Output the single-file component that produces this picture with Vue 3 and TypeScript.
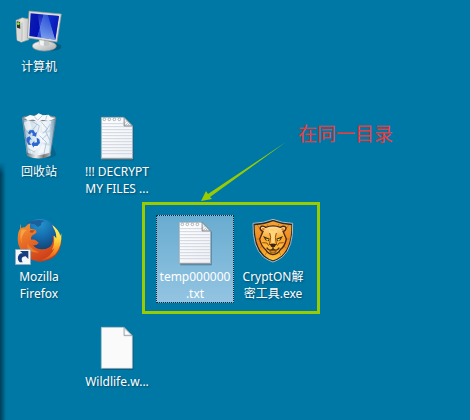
<script setup lang="ts">
type IconKind = 'computer' | 'bin' | 'firefox' | 'text' | 'blank' | 'lion'

interface DesktopItem {
  id: string
  kind: IconKind
  lines: string[]
  place: string
  selected?: boolean
}

const items: DesktopItem[] = [
  { id: 'computer', kind: 'computer', lines: ['计算机'], place: 'c1 r1' },
  { id: 'bin', kind: 'bin', lines: ['回收站'], place: 'c1 r2' },
  { id: 'firefox', kind: 'firefox', lines: ['Mozilla', 'Firefox'], place: 'c1 r3' },
  { id: 'decrypt', kind: 'text', lines: ['!!! DECRYPT', 'MY FILES ...'], place: 'c2 r2' },
  { id: 'wildlife', kind: 'blank', lines: ['Wildlife.w...'], place: 'c2 r4' },
  { id: 'temp', kind: 'text', lines: ['temp000000', '.txt'], place: 'c3 r3', selected: true },
  { id: 'crypton', kind: 'lion', lines: ['CryptON解', '密工具.exe'], place: 'c4 r3' },
]

const ruleLines = [56, 65, 74, 83, 92, 101, 110, 119, 128, 137, 146]
const rings = [79, 94, 109, 124]
</script>

<template>
  <main class="desktop">
    <div class="edge-shadow"></div>
    <button
      v-for="item in items"
      :key="item.id"
      type="button"
      class="item"
      :class="[item.place, { selected: item.selected }]"
    >
      <svg v-if="item.kind === 'computer'" class="icon" viewBox="45 24 144 144" aria-hidden="true">
        <defs>
          <linearGradient id="screen" x1="0" y1="0" x2="1" y2="0.25">
            <stop offset="0" stop-color="#0a1fae" />
            <stop offset="0.45" stop-color="#0510b4" />
            <stop offset="0.47" stop-color="#2c50d8" />
            <stop offset="0.75" stop-color="#1236cc" />
            <stop offset="1" stop-color="#0a1cb0" />
          </linearGradient>
          <linearGradient id="glare" x1="0" y1="0" x2="0" y2="1">
            <stop offset="0" stop-color="#8db6f6" stop-opacity="0.1" />
            <stop offset="1" stop-color="#a8ccff" stop-opacity="0.7" />
          </linearGradient>
          <linearGradient id="tower" x1="0" y1="0" x2="1" y2="0">
            <stop offset="0" stop-color="#a9aaa8" />
            <stop offset="0.4" stop-color="#e9e9e6" />
            <stop offset="1" stop-color="#c4c5c3" />
          </linearGradient>
          <linearGradient id="base" x1="0" y1="0" x2="1" y2="1">
            <stop offset="0" stop-color="#ffffff" />
            <stop offset="1" stop-color="#a6a8a8" />
          </linearGradient>
        </defs>
        <ellipse cx="146" cy="140" rx="38" ry="13" fill="#064a6b" opacity="0.6" />
        <path d="M48 61 67 53 87 57 87 119 64 127 51 121Z" fill="url(#tower)" stroke="#8f9596" stroke-width="2" />
        <path d="M48 61 64 64 66 126 51 121Z" fill="#d9dad7" />
        <path d="M50 64 60 66 61 86 51 83Z" fill="#2c332e" />
        <circle cx="55" cy="71" r="4" fill="#7cf12a" />
        <path d="M66 68V122" stroke="#a4a7a5" stroke-width="2" />
        <ellipse cx="133" cy="138" rx="36" ry="15" fill="url(#base)" stroke="#929797" stroke-width="2" />
        <path d="M116 116 145 120 149 134Q136 143 119 134Z" fill="#c2c5c5" />
        <path d="M119 119 132 121 131 139 120 134Z" fill="#f2f3f2" />
        <path d="M87 33 184 42 171 126 82 114Z" fill="#dcdddb" stroke="#8d9699" stroke-width="2" />
        <path d="M92 40 177 48 166 119 88 108Z" fill="url(#screen)" />
        <path d="M113 42 144 45 166 119 124 113Z" fill="url(#glare)" />
        <path d="M144 45 177 48 166 119Z" fill="#071cc0" opacity="0.55" />
      </svg>

      <svg v-else-if="item.kind === 'bin'" class="icon" viewBox="45 24 144 144" aria-hidden="true">
        <defs>
          <linearGradient id="glass" x1="0" y1="0" x2="1" y2="0">
            <stop offset="0" stop-color="#7fa4be" />
            <stop offset="0.2" stop-color="#c9dae7" />
            <stop offset="0.5" stop-color="#eef4f9" />
            <stop offset="0.8" stop-color="#c4d7e6" />
            <stop offset="1" stop-color="#64899f" />
          </linearGradient>
          <linearGradient id="metal" x1="0" y1="0" x2="1" y2="0">
            <stop offset="0" stop-color="#6b7175" />
            <stop offset="0.4" stop-color="#eeeeee" />
            <stop offset="0.7" stop-color="#777777" />
            <stop offset="1" stop-color="#bbbbbb" />
          </linearGradient>
        </defs>
        <path d="M152 110 170 151Q155 161 128 158Z" fill="#045075" opacity="0.45" />
        <path d="M66 38 81 150Q115 166 151 150L169 38Q118 20 66 38Z" fill="url(#glass)" />
        <path d="M70 54 88 44 96 70 80 78ZM123 50 154 48 148 76 128 81ZM118 85 150 82 146 116 124 111ZM83 119 104 108 119 126 94 143ZM126 118 149 122 146 144 117 143Z" fill="#ffffff" opacity="0.6" />
        <path d="M94 48 118 62 113 82M124 51 142 72 128 86M151 57 137 79 149 105M74 72 93 91M119 92 139 112 132 146M83 131 105 141M112 57 97 76M142 88 126 103" fill="none" stroke="#87a6c2" stroke-width="3" opacity="0.55" />
        <ellipse cx="118" cy="39" rx="50" ry="8" fill="#b9c6cc" stroke="#727f84" stroke-width="3" />
        <path d="M75 38 90 30 103 34 116 25 129 31 146 29 152 37 164 41 145 48 128 44 113 51 99 43 83 47Z" fill="#f8fafb" />
        <path d="M103 35 113 46 127 32M141 31 137 44" fill="none" stroke="#bdccd7" stroke-width="3" />
        <path d="M79 142Q115 159 153 142L151 153Q116 168 82 153Z" fill="url(#metal)" />
        <path d="M69 43 83 149M167 43 151 149" stroke="#527286" stroke-width="2" />
        <g fill="#2d68d0">
          <path d="M84 85 89 76 100 75 106 84 111 81 108 95 95 91 99 88 95 82 90 88Z" />
          <path d="M80 98 89 94 95 104 90 103 88 112 94 119 86 120 79 108Z" />
          <path d="M110 98 118 103 120 114 112 123 102 123 101 128 94 117 103 107 103 113 111 112Z" />
        </g>
      </svg>

      <svg v-else-if="item.kind === 'firefox'" class="icon" viewBox="45 24 144 144" aria-hidden="true">
        <defs>
          <radialGradient id="globe" cx="0.5" cy="0.12" r="0.85">
            <stop offset="0" stop-color="#2496cf" />
            <stop offset="0.45" stop-color="#1569aa" />
            <stop offset="1" stop-color="#12305e" />
          </radialGradient>
          <linearGradient id="fox" x1="0" y1="0" x2="0.6" y2="1">
            <stop offset="0" stop-color="#f09a3a" />
            <stop offset="0.4" stop-color="#ea7027" />
            <stop offset="1" stop-color="#ca3b18" />
          </linearGradient>
          <linearGradient id="tail" x1="0" y1="0" x2="0" y2="1">
            <stop offset="0" stop-color="#fff36b" />
            <stop offset="0.4" stop-color="#ffd93f" />
            <stop offset="0.75" stop-color="#f58a22" />
            <stop offset="1" stop-color="#d8501c" />
          </linearGradient>
        </defs>
        <circle cx="120" cy="84" r="57" fill="url(#globe)" />
        <path d="M80 40Q106 25 135 33Q119 37 124 45L113 51 104 43Z" fill="#1b5f9c" />
        <path d="M62 41Q61 49 64 55Q67 52 75 52Q82 43 91 40Q88 49 91 56L107 59Q112 65 108 70L98 76Q91 81 94 89Q102 87 109 92L116 98Q111 106 99 106Q109 119 127 118Q147 117 155 104Q162 92 158 76Q169 83 168 98Q178 83 173 63Q188 83 182 106Q172 151 121 155Q70 151 55 103Q49 73 61 55Q58 48 62 41Z" fill="url(#fox)" />
        <path d="M157 45Q176 59 181 77L184 70Q187 106 166 133Q145 151 122 151Q153 142 163 115L155 121Q165 102 162 77L169 85Q169 66 160 53Z" fill="url(#tail)" />
        <path d="M64 60Q72 57 81 61Q73 64 70 73Q61 85 66 101Q57 84 64 60Z" fill="#ffb24d" opacity="0.65" />
        <path d="M91 61 105 61 97 68 89 67Z" fill="#b64924" />
        <path d="M82 100Q94 119 117 127Q97 130 82 116Z" fill="#f18b32" opacity="0.7" />
        <rect x="46" y="118" width="46" height="46" fill="#f4f6f8" stroke="#8b9dac" stroke-width="2" />
        <path d="M59 157Q49 145 57 134Q62 129 68 130L60 123H85V147L77 139Q66 139 65 147Q65 153 68 157Z" fill="#173f80" />
      </svg>

      <svg v-else-if="item.kind === 'text'" class="icon" viewBox="45 24 144 144" aria-hidden="true">
        <defs>
          <linearGradient id="paper" x1="0" y1="0" x2="1" y2="1">
            <stop offset="0" stop-color="#ffffff" />
            <stop offset="1" stop-color="#edf0f5" />
          </linearGradient>
        </defs>
        <path d="M73 40H140L167 65V166H73Z" fill="#073c57" opacity="0.5" />
        <path d="M70 37H138L164 63V162H70Z" fill="url(#paper)" stroke="#9ba3aa" stroke-width="2" />
        <path v-for="y in ruleLines" :key="y" :d="`M72 ${y}H${y < 62 ? 138 : 162}`" stroke="#cfd5e0" stroke-width="3" />
        <g v-for="x in rings" :key="x" fill="#ffffff" stroke="#8a9195" stroke-width="2">
          <circle :cx="x" cy="43" r="4" />
        </g>
        <path d="M138 36 164 63H138Z" fill="#bfc4c8" stroke="#707a81" stroke-width="2" />
        <path d="M140 43 158 61H142Z" fill="#f7f8f9" />
        <path d="M142 61 149 55M149 61 154 57M141 53 145 49" stroke="#8c949a" stroke-width="2" />
        <path d="M71 160H163" stroke="#899094" stroke-width="3" />
      </svg>

      <svg v-else-if="item.kind === 'blank'" class="icon" viewBox="45 24 144 144" aria-hidden="true">
        <path d="M73 40H140L166 64V164H73Z" fill="#073c57" opacity="0.5" />
        <path d="M70 37H138L163 62V160H70Z" fill="#fafafa" stroke="#b6b9bb" stroke-width="2" />
        <path d="M138 37 163 62H138Z" fill="#e2e5e6" stroke="#7f8b91" stroke-width="2" />
        <path d="M142 46 155 58H142Z" fill="#ffffff" />
      </svg>

      <svg v-else class="icon" viewBox="57 69 144 144" aria-hidden="true">
        <defs>
          <linearGradient id="shield" x1="0" y1="0" x2="0" y2="1">
            <stop offset="0" stop-color="#f3a331" />
            <stop offset="0.6" stop-color="#ef8519" />
            <stop offset="1" stop-color="#ffc93d" />
          </linearGradient>
          <linearGradient id="mane" x1="0" y1="0" x2="0" y2="1">
            <stop offset="0" stop-color="#ffdf9c" />
            <stop offset="0.45" stop-color="#fba62a" />
            <stop offset="1" stop-color="#ffcb48" />
          </linearGradient>
        </defs>
        <path d="M69 85Q102 84 129 73Q156 84 188 85Q191 157 157 186Q142 197 129 201Q116 197 100 186Q67 157 69 85Z" fill="#292c2f" stroke="#aeb9c0" stroke-width="3" />
        <path d="M74 91Q105 89 129 79Q154 89 184 91Q185 154 155 182Q141 192 129 196Q116 192 104 182Q74 155 74 91Z" fill="url(#shield)" />
        <path d="M82 90 97 114M111 87 118 102M147 87 140 102M176 90 161 114M78 132 99 132M180 132 159 132M89 159 108 145M169 159 150 145M105 181 114 165M153 181 144 165" stroke="#bd6519" stroke-width="2" />
        <path d="M99 109Q89 105 91 97Q96 90 107 97Q129 88 151 97Q163 90 168 98Q168 107 159 109L169 132Q164 155 151 164Q143 178 129 179Q115 178 107 164Q93 153 89 132Z" fill="url(#mane)" stroke="#4a2817" stroke-width="4" />
        <path d="M96 100Q102 97 105 103L98 107M162 101Q156 97 153 103L160 107" fill="#db7b1c" />
        <path d="M114 101 122 119 125 148H133L136 119 144 101 132 108H126Z" fill="#ffd67a" />
        <path d="M99 123 119 131 116 139 107 136ZM159 123 139 131 142 139 151 136Z" fill="#382514" />
        <path d="M106 130 117 134 112 137ZM152 130 141 134 146 137Z" fill="#fff05a" />
        <path d="M119 114 122 127 118 150M139 114 136 127 140 150M97 143 111 144 116 152M161 143 147 144 142 152" fill="none" stroke="#965017" stroke-width="3" />
        <path d="M119 148Q129 143 139 148L134 156H124Z" fill="#3b2518" />
        <path d="M129 154V162M129 161Q119 171 110 158M129 161Q139 171 148 158" fill="none" stroke="#51300f" stroke-width="4" />
        <path d="M119 168Q129 164 139 168L135 174H123Z" fill="#e78c20" stroke="#51300f" stroke-width="2" />
      </svg>

      <span class="label">
        <span v-for="line in item.lines" :key="line" class="line">{{ line }}</span>
      </span>
    </button>

    <div class="frame"></div>
    <svg class="arrow" viewBox="0 0 88 62" aria-hidden="true">
      <path d="M86 0 8 52 6 49 1 59 12 57 10 55Z" fill="#99cc00" />
    </svg>
    <p class="note">在同一目录</p>
  </main>
</template>

<style>
body {
  margin: 0;
  background: #0078a5;
}
</style>

<style scoped>
.desktop {
  position: relative;
  box-sizing: border-box;
  min-height: 100vh;
  max-height: 100vh;
  padding-top: 5px;
  display: grid;
  grid-template-columns: repeat(4, 78px);
  grid-template-rows: repeat(4, 105px);
  align-items: start;
  overflow: hidden;
  background: #0078a5;
  font-family: "Noto Sans", "Noto Sans CJK SC", sans-serif;
}

.edge-shadow {
  position: absolute;
  left: 0;
  top: 162px;
  bottom: 0;
  width: 6px;
  background: linear-gradient(to right, rgba(0, 20, 35, 0.6), rgba(0, 20, 35, 0));
  mask-image: linear-gradient(to bottom, transparent, #000 12px);
}

.item {
  box-sizing: border-box;
  width: 100%;
  min-height: 88px;
  padding: 2px 0 0;
  border: 1px solid transparent;
  background: none;
  display: flex;
  flex-direction: column;
  align-items: center;
  gap: 2px;
  font: inherit;
  color: #fff;
}

.selected {
  border: 1px dotted #10232e;
  border-radius: 1px;
  background: linear-gradient(#69acd0, #93c4e2);
}

.c1 { grid-column: 1; }
.c2 { grid-column: 2; }
.c3 { grid-column: 3; }
.c4 { grid-column: 4; }
.r1 { grid-row: 1; }
.r2 { grid-row: 2; }
.r3 { grid-row: 3; }
.r4 { grid-row: 4; }

.icon {
  display: block;
  width: 48px;
  height: 48px;
}

.label {
  font-size: 12px;
  line-height: 17px;
  text-align: center;
  white-space: nowrap;
  text-shadow: 1px 1px 2px rgba(0, 30, 50, 0.5);
}

.selected .label {
  text-shadow: none;
}

.line {
  display: block;
  height: 17px;
}

.frame {
  position: absolute;
  box-sizing: border-box;
  left: 142px;
  top: 202px;
  width: 178px;
  height: 112px;
  border: 3px solid #99cc00;
  pointer-events: none;
}

.arrow {
  position: absolute;
  left: 200px;
  top: 142px;
  width: 88px;
  height: 62px;
}

.note {
  position: absolute;
  left: 298px;
  top: 120px;
  margin: 0;
  font-size: 19px;
  font-weight: 400;
  line-height: 28px;
  color: #f03a3c;
  white-space: nowrap;
}
</style>
